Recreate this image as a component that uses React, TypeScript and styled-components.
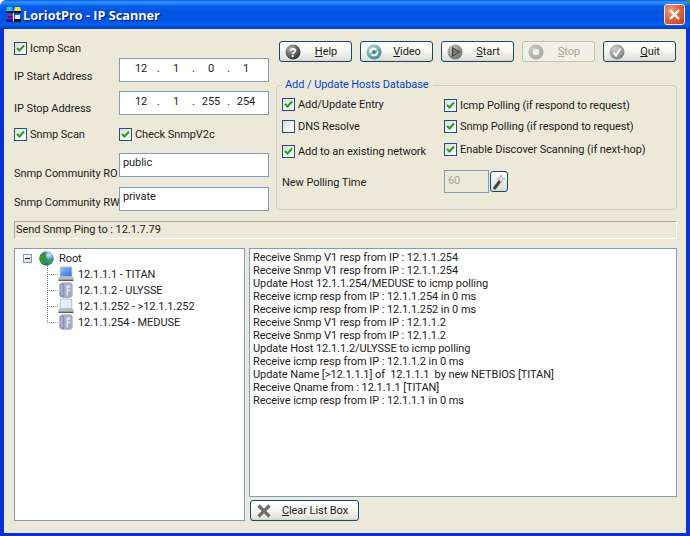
import React from 'react';
import styled, { createGlobalStyle } from 'styled-components';

const Global = createGlobalStyle`
  html, body { margin: 0; padding: 0; background: linear-gradient(to right, #fff 50%, #3c9a3c 50%); }
  #root { width: 690px; height: 536px; }
  * { box-sizing: border-box; }
`;

const Win = styled.div`
  width: 690px; height: 536px; display: flex; flex-direction: column;
  font-family: Roboto, "Liberation Sans", Arial, sans-serif; font-size: 11px; letter-spacing: -0.07px; color: #1c1c1c;
  border-radius: 7px 7px 0 0; overflow: hidden; background: #0831d9;
`;
const TitleBar = styled.div`
  height: 29px; flex: none; display: flex; align-items: center; padding: 0 5px;
  background: linear-gradient(to bottom, #0058e6 0, #3a93ff 2px, #288eff 3px, #0a5fe8 6px, #0055e5 11px, #0055e5 20px, #0660ee 25px, #0348cf 27px, #0040c0 29px);
`;
const TitleText = styled.span`
  margin-left: 1px; font-family: "Open Sans", sans-serif; font-weight: 700; font-size: 12.7px; letter-spacing: 0; color: #fff;
  text-shadow: 1px 1px 1px #0f1089;
`;
const CloseBtn = styled.button`
  margin-left: auto; width: 21px; height: 21px; padding: 0; display: grid; place-items: center;
  border: 1px solid #f6e6e0; border-radius: 3px;
  background: radial-gradient(circle at 30% 30%, #ec9a7c 0, #e0623c 50%, #c03a16 100%);
`;
const Client = styled.div`
  flex: 1; margin: 0 4px 3px; background: #ece9d8; padding: 12px 9px 0 10px;
  display: flex; flex-direction: column; min-height: 0;
`;
const Top = styled.div`
  display: grid; grid-template-columns: 255px 401px; column-gap: 7px; height: 170px; flex: none;
`;
const LeftCol = styled.div`
  display: flex; flex-direction: column;
`;
const Row = styled.div<{ $h: number }>`
  height: ${p => p.$h}px; display: flex; align-items: flex-start; flex: none;
`;
const Check = styled.label<{ $w?: number; $dy?: number }>`
  display: flex; align-items: center; gap: 3px; height: 15px; white-space: nowrap;
  width: ${p => (p.$w ? p.$w + 'px' : 'auto')};
  margin-top: ${p => p.$dy ?? 0}px;
`;
const Box = styled.span`
  width: 13px; height: 13px; flex: none; border: 1px solid #1c5180; display: grid; place-items: center;
  background: linear-gradient(135deg, #dcdcd7 0, #fff 90%);
`;
const FieldLabel = styled.span<{ $dy: number }>`
  width: 105px; flex: none; line-height: 15px; margin-top: ${p => p.$dy}px; white-space: nowrap;
`;
const FieldBox = styled.div<{ $h: number }>`
  width: 150px; height: ${p => p.$h}px; border: 1px solid #7f9db9; background: #fff;
`;
const IpBox = styled(FieldBox)`
  display: flex; padding: 2px 0 0 11px; line-height: 15px;
`;
const Octet = styled.span`
  width: 20px; text-align: center;
`;
const Dot = styled.span`
  width: 15px; text-align: center;
`;
const TextBox = styled(FieldBox)`
  padding: 1px 3px; line-height: 15px;
`;
const RightCol = styled.div`
  display: flex; flex-direction: column;
`;
const Toolbar = styled.div`
  display: flex; gap: 8px; padding-left: 3px;
`;
const Btn = styled.button<{ $off?: boolean }>`
  width: 73px; height: 21px; padding: 0 0 0 5px; display: flex; align-items: center;
  font: inherit; letter-spacing: inherit; color: ${p => (p.$off ? '#a9a694' : '#1c1c1c')};
  border: 1px solid ${p => (p.$off ? '#c4c2b2' : '#0f4a78')}; border-radius: 3px;
  background: ${p => (p.$off ? '#f2f0e6' : 'linear-gradient(to bottom, #fff 0, #f5f4ef 50%, #e4e2d8 90%, #d6d0c5 100%)')};
`;
const ClearBtn = styled(Btn)`
  width: 109px; margin-left: 1px;
`;
const BtnLabel = styled.span`
  flex: 1; text-align: center; white-space: nowrap;
`;
const Group = styled.fieldset`
  margin: 16px 0 0; padding: 0 0 0 5px; height: 132px; min-width: 0;
  border: 1px solid #d0d0bf; border-radius: 4px;
`;
const Legend = styled.legend`
  margin-left: 0; padding: 0 4px 0 3px; color: #0046d5; line-height: 14px;
`;
const GroupGrid = styled.div`
  display: grid; grid-template-columns: 162px 1fr; grid-template-rows: 22px 22px 27px 34px;
  margin-top: 5px;
`;
const GroupLabel = styled.span`
  line-height: 15px; margin-top: 7px;
`;
const PollRow = styled.div`
  display: flex; align-items: flex-start; gap: 1px; margin-top: 2px;
`;
const PollInput = styled.div`
  width: 45px; height: 23px; border: 1px solid #7f9db9; background: #ece9d8; color: #a8a694; padding: 2px 3px; line-height: 15px;
`;
const WandBtn = styled.button`
  width: 18px; height: 21px; padding: 0; margin-top: 1px; display: grid; place-items: center;
  border: 1px solid #0f4a78; border-radius: 3px; background: linear-gradient(to bottom, #fff, #dcdad0);
`;
const Status = styled.div`
  flex: none; margin-top: 10px; height: 18px; border: 1px solid; border-color: #aca899 #fff #fff #aca899;
  padding: 0 1px; line-height: 15px;
`;
const Bottom = styled.div`
  flex: none; margin-top: 9px; display: grid; grid-template-columns: 231px 428px; column-gap: 4px; height: 273px;
`;
const Tree = styled.div`
  border: 1px solid #7f9db9; background: #fff; padding: 1px 0 0 8px;
`;
const RootRow = styled.div`
  display: flex; align-items: center; height: 16px;
`;
const Expander = styled.span`
  width: 9px; height: 9px; flex: none; border: 1px solid #7f9db9; background: linear-gradient(135deg, #fff, #d8d4c4);
  display: grid; place-items: center; margin-right: 7px;
`;
const Rootlabel = styled.span`
  margin-left: 5px;
`;
const Children = styled.div`
  margin-left: 24px;
`;
const ChildRow = styled.div`
  display: flex; align-items: center; height: 16px; white-space: nowrap;
`;
const Connector = styled.span<{ $last?: boolean }>`
  width: 11px; align-self: stretch; flex: none;
  background-image:
    repeating-linear-gradient(to bottom, #888 0 1px, transparent 1px 2px),
    repeating-linear-gradient(to right, #888 0 1px, transparent 1px 2px);
  background-repeat: no-repeat;
  background-size: 1px ${p => (p.$last ? '50%' : '100%')}, 100% 1px;
  background-position: 0 0, 0 50%;
`;
const ChildLabel = styled.span`
  margin-left: 4px;
`;
const LogCol = styled.div`
  display: flex; flex-direction: column; gap: 3px;
`;
const Log = styled.div`
  height: 249px; border: 1px solid #7f9db9; background: #fff; padding: 2px 3px; line-height: 13px; white-space: pre;
`;
const LogLine = styled.div`
  height: 13px;
`;
const IconSvg = styled.svg`
  flex: none;
`;

const Ic = { width: 16, height: 16, viewBox: '0 0 16 16' } as const;
const CheckMark = () => (
  <svg width="9" height="9" viewBox="0 0 9 9"><path d="M1 4l2.5 2.5L8 1.5" fill="none" stroke="#21a121" strokeWidth="2" /></svg>
);
const Cb = ({ on = true }: { on?: boolean }) => <Box>{on && <CheckMark />}</Box>;

const Logo = () => (
  <IconSvg width="17" height="17" viewBox="0 0 17 17">
    <path d="M2 1h5l1 4H1z" fill="#12d0e8" /><path d="M10 1h5l1 4H9z" fill="#f4e21c" />
    <rect x="1" y="5" width="7" height="2" fill="#0a0a30" /><rect x="9" y="5" width="7" height="2" fill="#0a0a30" />
    <rect x="2" y="9" width="6" height="4" fill="#e01818" /><rect x="3" y="10" width="4" height="2" fill="#1a1ad0" />
    <rect x="10" y="9" width="5" height="4" fill="#f0f0f0" />
    <rect x="1" y="13" width="7" height="3" fill="#1818b0" /><rect x="9" y="13" width="7" height="3" fill="#101010" />
    <rect x="8" y="7" width="1" height="8" fill="#e8eefc" />
  </IconSvg>
);
const Sphere = ({ id, c1, c2, children }: { id: string; c1: string; c2: string; children?: React.ReactNode }) => (
  <IconSvg {...Ic}>
    <defs><radialGradient id={id} cx="35%" cy="30%" r="75%"><stop offset="0" stopColor={c1} /><stop offset="1" stopColor={c2} /></radialGradient></defs>
    <circle cx="8" cy="8" r="7.5" fill={`url(#${id})`} />
    {children}
  </IconSvg>
);
const HelpIcon = () => <Sphere id="h" c1="#b0b0b0" c2="#2e2e2e"><text x="8" y="12.5" textAnchor="middle" fontFamily="Liberation Sans" fontWeight="700" fontSize="12" fill="#fff">?</text></Sphere>;
const VideoIcon = () => <Sphere id="v" c1="#bfe0d8" c2="#3f8a86"><path d="M4.5 9a3.6 3.6 0 0 1 6-3.4M11.5 7a3.6 3.6 0 0 1-6 3.4" fill="none" stroke="#fff" strokeWidth="1.6" /><circle cx="8" cy="8" r="1.6" fill="#2f7d7a" /></Sphere>;
const StartIcon = () => <Sphere id="s" c1="#c8c8c0" c2="#70706a"><path d="M5.5 3.5l7 4.5-7 4.5z" fill="#7c7c74" stroke="#3a3a36" strokeWidth="1" /></Sphere>;
const StopIcon = () => <Sphere id="p" c1="#c8c8c4" c2="#a8a8a4"><rect x="5" y="5" width="6" height="6" rx="1" fill="#eeeeea" /></Sphere>;
const QuitIcon = () => <Sphere id="q" c1="#d0d0d0" c2="#808080"><path d="M4.5 8.5l2.5 3 4.5-7" fill="none" stroke="#fff" strokeWidth="2" /></Sphere>;
const ClearIcon = () => (
  <IconSvg {...Ic}><path d="M2.5 2.5l11 11M13.5 2.5l-11 11" stroke="#6c6c6c" strokeWidth="3.2" /></IconSvg>
);
const Wand = () => (
  <svg width="16" height="18" viewBox="0 0 16 18"><path d="M3 16l6-8" stroke="#444" strokeWidth="3" /><path d="M10 2l1 3 3 1-3 1-1 3-1-3-3-1 3-1z" fill="#eee" stroke="#999" strokeWidth=".6" /></svg>
);
const Globe = () => (
  <IconSvg width="15" height="15" viewBox="0 0 15 15">
    <defs><radialGradient id="g" cx="65%" cy="25%" r="80%"><stop offset="0" stopColor="#cfe8fa" /><stop offset=".5" stopColor="#3f86cc" /><stop offset="1" stopColor="#154f9c" /></radialGradient></defs>
    <circle cx="7.5" cy="7.5" r="7.2" fill="url(#g)" />
    <path d="M1 5c1-2 3-4 6-4 1 2-1 3 0 5s2 2 1 4-2 4-3 4C2 13 0 9 1 5z" fill="#2f9a2f" />
    <path d="M10 8c2-1 3 0 4 0-1 3-2 5-4 6-1-2-1-4 0-6z" fill="#3aa43a" />
  </IconSvg>
);
const Pc = ({ id, c1, c2 }: { id: string; c1: string; c2: string }) => (
  <IconSvg {...Ic}>
    <defs><linearGradient id={id} x1="0" y1="0" x2="1" y2="1"><stop offset="0" stopColor={c1} /><stop offset="1" stopColor={c2} /></linearGradient></defs>
    <path d="M2.5 1h11l.5 9.5H2z" fill={`url(#${id})`} stroke="#aeb4c2" strokeWidth=".8" />
    <rect x="0.5" y="11" width="15" height="2.5" fill="#b8bcc4" /><rect x="0.5" y="13.5" width="15" height="1.5" fill="#5e5e62" />
  </IconSvg>
);
const Server = () => (
  <IconSvg {...Ic}>
    <path d="M1.5 2L5 .5h7.5L14.5 2v12L12 15.7H4.5L1.5 14z" fill="#8d92b4" />
    <path d="M6 1h6.5L14 2.5v11L12 15H6z" fill="#a6abc8" />
    <path d="M8.5 3.5h4v2h-2.5v2h2.5v1.6h-2.5v4.4h-1.5z" fill="#e6e8f2" />
    <rect x="3" y="3" width="1.5" height="10" fill="#b9bdd4" />
  </IconSvg>
);

const logs = [
  'Receive Snmp V1 resp from IP : 12.1.1.254',
  'Receive Snmp V1 resp from IP : 12.1.1.254',
  'Update Host 12.1.1.254/MEDUSE to icmp polling',
  'Receive icmp resp from IP : 12.1.1.254 in 0 ms',
  'Receive icmp resp from IP : 12.1.1.252 in 0 ms',
  'Receive Snmp V1 resp from IP : 12.1.1.2',
  'Receive Snmp V1 resp from IP : 12.1.1.2',
  'Update Host 12.1.1.2/ULYSSE to icmp polling',
  'Receive icmp resp from IP : 12.1.1.2 in 0 ms',
  'Update Name [>12.1.1.1] of  12.1.1.1  by new NETBIOS [TITAN]',
  'Receive Qname from : 12.1.1.1 [TITAN]',
  'Receive icmp resp from IP : 12.1.1.1 in 0 ms',
];

const Ip = ({ parts }: { parts: string[] }) => (
  <IpBox $h={24}>
    {parts.map((p, i) => (
      <React.Fragment key={i}>
        {i > 0 && <Dot>.</Dot>}
        <Octet>{p}</Octet>
      </React.Fragment>
    ))}
  </IpBox>
);

export default function App() {
  return (
    <Win>
      <Global />
      <TitleBar>
        <Logo />
        <TitleText>LoriotPro - IP Scanner</TitleText>
        <CloseBtn aria-label="Close">
          <svg width="13" height="13" viewBox="0 0 13 13"><path d="M2 2l9 9M11 2l-9 9" stroke="#fff" strokeWidth="2.4" /></svg>
        </CloseBtn>
      </TitleBar>
      <Client>
        <Top>
          <LeftCol>
            <Row $h={17}><Check><Cb />Icmp Scan</Check></Row>
            <Row $h={33}><FieldLabel $dy={11}>IP Start Address</FieldLabel><Ip parts={['12', '1', '0', '1']} /></Row>
            <Row $h={35}><FieldLabel $dy={10}>IP Stop Address</FieldLabel><Ip parts={['12', '1', '255', '254']} /></Row>
            <Row $h={27}><Check $w={105} $dy={1}><Cb />Snmp Scan</Check><Check $dy={1}><Cb />Check SnmpV2c</Check></Row>
            <Row $h={34}><FieldLabel $dy={13}>Snmp Community RO</FieldLabel><TextBox $h={24}>public</TextBox></Row>
            <Row $h={24}><FieldLabel $dy={8}>Snmp Community RW</FieldLabel><TextBox $h={24}>private</TextBox></Row>
          </LeftCol>
          <RightCol>
            <Toolbar>
              <Btn><HelpIcon /><BtnLabel><u>H</u>elp</BtnLabel></Btn>
              <Btn><VideoIcon /><BtnLabel><u>V</u>ideo</BtnLabel></Btn>
              <Btn><StartIcon /><BtnLabel><u>S</u>tart</BtnLabel></Btn>
              <Btn $off disabled><StopIcon /><BtnLabel><u>S</u>top</BtnLabel></Btn>
              <Btn><QuitIcon /><BtnLabel><u>Q</u>uit</BtnLabel></Btn>
            </Toolbar>
            <Group>
              <Legend>Add / Update Hosts Database</Legend>
              <GroupGrid>
                <Check><Cb />Add/Update Entry</Check>
                <Check $dy={1}><Cb />Icmp Polling (if respond to request)</Check>
                <Check><Cb on={false} />DNS Resolve</Check>
                <Check><Cb />Snmp Polling (if respond to request)</Check>
                <Check $dy={3}><Cb />Add to an existing network</Check>
                <Check $dy={1}><Cb />Enable Discover Scanning (if next-hop)</Check>
                <GroupLabel>New Polling Time</GroupLabel>
                <PollRow>
                  <PollInput>60</PollInput>
                  <WandBtn aria-label="Set"><Wand /></WandBtn>
                </PollRow>
              </GroupGrid>
            </Group>
          </RightCol>
        </Top>
        <Status>Send Snmp Ping to : 12.1.7.79</Status>
        <Bottom>
          <Tree>
            <RootRow>
              <Expander><svg width="5" height="1"><rect width="5" height="1" fill="#222" /></svg></Expander>
              <Globe />
              <Rootlabel>Root</Rootlabel>
            </RootRow>
            <Children>
              <ChildRow><Connector /><Pc id="pa" c1="#8ec4fa" c2="#2a6fe0" /><ChildLabel>12.1.1.1 - TITAN</ChildLabel></ChildRow>
              <ChildRow><Connector /><Server /><ChildLabel>12.1.1.2 - ULYSSE</ChildLabel></ChildRow>
              <ChildRow><Connector /><Pc id="pb" c1="#f4f8fc" c2="#cfe6f8" /><ChildLabel>12.1.1.252 - &gt;12.1.1.252</ChildLabel></ChildRow>
              <ChildRow><Connector $last /><Server /><ChildLabel>12.1.1.254 - MEDUSE</ChildLabel></ChildRow>
            </Children>
          </Tree>
          <LogCol>
            <Log>{logs.map((l, i) => <LogLine key={i}>{l}</LogLine>)}</Log>
            <ClearBtn><ClearIcon /><BtnLabel><u>C</u>lear List Box</BtnLabel></ClearBtn>
          </LogCol>
        </Bottom>
      </Client>
    </Win>
  );
}
